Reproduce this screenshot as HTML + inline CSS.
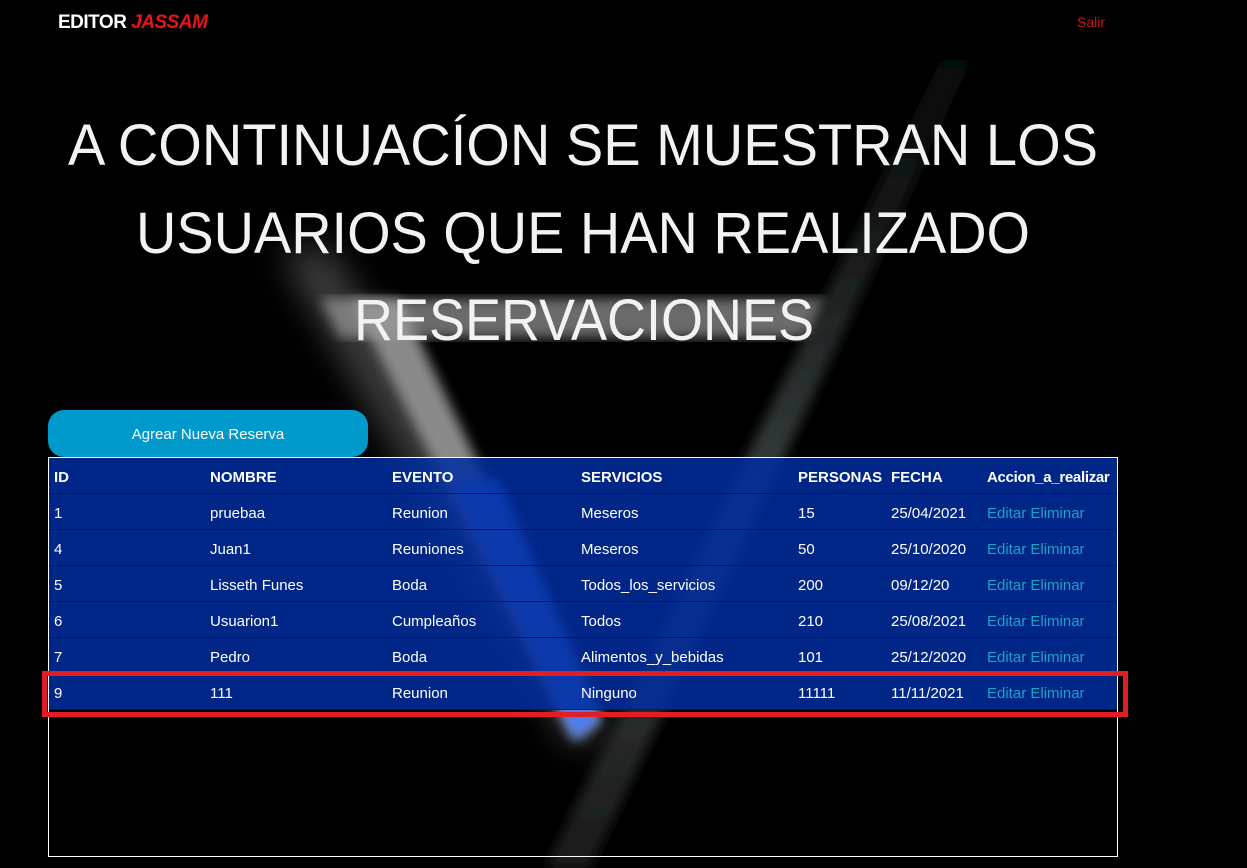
<!DOCTYPE html>
<html><head><meta charset="utf-8"><style>
*{margin:0;padding:0;box-sizing:border-box}
body{width:1247px;height:868px;background:#000;overflow:hidden;position:relative;font-family:"Liberation Sans",sans-serif;color:#fff}
svg.bg{position:absolute;left:0;top:0}
.logo{position:absolute;left:58px;top:12px;font-size:19px;font-weight:bold;letter-spacing:-0.5px}
.logo i{color:#e8141b}
.salir{position:absolute;left:1077px;top:14px;font-size:14px;color:#d0121a}
.btn{position:absolute;left:48px;top:410px;width:320px;height:47px;background:#0099cc;border-radius:16px;text-align:center;line-height:50px;font-size:15px;color:#fff}
.tbl{position:absolute;left:48px;top:457px;width:1070px;height:400px;border:1px solid #fff}
.row{position:absolute;left:0;width:1068px;height:36px;background:rgba(0,45,160,0.85);border-bottom:1px solid #001a5a;font-size:15px}
.row span{position:absolute;top:11px;white-space:nowrap}
.hd span{font-weight:bold}
.a{color:#1aa3c8}
.red{position:absolute;left:42px;top:671px;width:1086px;height:46px;border:5px solid #e31d25}
</style></head><body>
<svg class="bg" width="1247" height="868">
<defs>
<filter id="b"><feGaussianBlur stdDeviation="6"/></filter>
<filter id="b2"><feGaussianBlur stdDeviation="18"/></filter>
<linearGradient id="ra" x1="0" y1="0" x2="0" y2="1"><stop offset="0" stop-color="#000"/><stop offset="0.3" stop-color="#1a1d1d"/><stop offset="0.6" stop-color="#3a4242"/><stop offset="1" stop-color="#1a1a1a"/></linearGradient>
</defs>
<polygon points="280,250 330,250 610,740 570,740" fill="#888" filter="url(#b2)" opacity="0.5"/>
<polygon points="350,300 400,300 600,720 575,740" fill="#8a8a8a" filter="url(#b)"/>
<polygon points="450,480 500,480 600,720 575,740" fill="#4a7ff0" filter="url(#b)"/>
<polygon points="320,298 830,298 820,338 340,338" fill="#999" filter="url(#b)" opacity="0.7"/>
<polygon points="970,0 1000,0 590,868 545,868" fill="url(#ra)" filter="url(#b)"/>
<text x="583" y="165" text-anchor="middle" font-size="58" font-family="Liberation Sans" fill="#f2f2f2" textLength="1030" lengthAdjust="spacingAndGlyphs">A CONTINUACÍON SE MUESTRAN LOS</text>
<text x="583" y="253" text-anchor="middle" font-size="58" font-family="Liberation Sans" fill="#f2f2f2" textLength="894" lengthAdjust="spacingAndGlyphs">USUARIOS QUE HAN REALIZADO</text>
<text x="584" y="340" text-anchor="middle" font-size="58" font-family="Liberation Sans" fill="#f2f2f2" textLength="460" lengthAdjust="spacingAndGlyphs">RESERVACIONES</text>
</svg>
<div class="logo">EDITOR <i>JASSAM</i></div>
<div class="salir">Salir</div>
<div class="btn">Agrear Nueva Reserva</div>
<div class="tbl">
<div class="row hd" style="top:0"><span style="left:5px">ID</span><span style="left:161px">NOMBRE</span><span style="left:343px">EVENTO</span><span style="left:532px">SERVICIOS</span><span style="left:749px">PERSONAS</span><span style="left:842px">FECHA</span><span style="left:938px;letter-spacing:-0.3px">Accion_a_realizar</span></div>
<div class="row" style="top:36px"><span style="left:5px">1</span><span style="left:161px">pruebaa</span><span style="left:343px">Reunion</span><span style="left:532px">Meseros</span><span style="left:749px">15</span><span style="left:842px">25/04/2021</span><span style="left:938px" class="a">Editar Eliminar</span></div>
<div class="row" style="top:72px"><span style="left:5px">4</span><span style="left:161px">Juan1</span><span style="left:343px">Reuniones</span><span style="left:532px">Meseros</span><span style="left:749px">50</span><span style="left:842px">25/10/2020</span><span style="left:938px" class="a">Editar Eliminar</span></div>
<div class="row" style="top:108px"><span style="left:5px">5</span><span style="left:161px">Lisseth Funes</span><span style="left:343px">Boda</span><span style="left:532px">Todos_los_servicios</span><span style="left:749px">200</span><span style="left:842px">09/12/20</span><span style="left:938px" class="a">Editar Eliminar</span></div>
<div class="row" style="top:144px"><span style="left:5px">6</span><span style="left:161px">Usuarion1</span><span style="left:343px">Cumpleaños</span><span style="left:532px">Todos</span><span style="left:749px">210</span><span style="left:842px">25/08/2021</span><span style="left:938px" class="a">Editar Eliminar</span></div>
<div class="row" style="top:180px"><span style="left:5px">7</span><span style="left:161px">Pedro</span><span style="left:343px">Boda</span><span style="left:532px">Alimentos_y_bebidas</span><span style="left:749px">101</span><span style="left:842px">25/12/2020</span><span style="left:938px" class="a">Editar Eliminar</span></div>
<div class="row" style="top:216px"><span style="left:5px">9</span><span style="left:161px">111</span><span style="left:343px">Reunion</span><span style="left:532px">Ninguno</span><span style="left:749px">11111</span><span style="left:842px">11/11/2021</span><span style="left:938px" class="a">Editar Eliminar</span></div>
</div>
<div class="red"></div>
</body></html>
